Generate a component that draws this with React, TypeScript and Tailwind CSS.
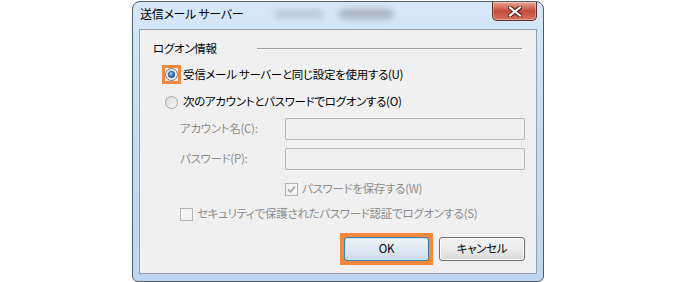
import React from 'react';

const font = "font-['Noto_Sans_CJK_JP','Noto_Sans',sans-serif] [font-feature-settings:'palt']";

const Radio = ({ checked = false }: { checked?: boolean }) => (
  <svg width="13" height="13" viewBox="0 0 13 13">
    <defs>
      <linearGradient id={checked ? 'rg1' : 'rg2'} x1="0" y1="0" x2="1" y2="1">
        <stop offset="0" stopColor="#d6d6d6" />
        <stop offset="1" stopColor="#fbfbfb" />
      </linearGradient>
      <radialGradient id="dot" cx="0.4" cy="0.35" r="0.7">
        <stop offset="0" stopColor="#b5dcf7" />
        <stop offset="0.45" stopColor="#3b86cf" />
        <stop offset="1" stopColor="#1a4f8c" />
      </radialGradient>
    </defs>
    <circle cx="6.5" cy="6.5" r="6" fill={`url(#${checked ? 'rg1' : 'rg2'})`} stroke={checked ? '#7a7a7a' : '#a3a3a3'} />
    {checked && <circle cx="6.5" cy="6.5" r="3.3" fill="url(#dot)" stroke="#1f4f82" strokeWidth="0.6" />}
  </svg>
);

const Check = ({ checked = false }: { checked?: boolean }) => (
  <span className="w-[13px] h-[13px] border border-[#b4b4b4] bg-[#f4f4f4] flex items-center justify-center shrink-0">
    {checked && (
      <svg width="9" height="9" viewBox="0 0 9 9">
        <path d="M1 4.5 L3.5 7 L8 1.5" fill="none" stroke="#a9a9a9" strokeWidth="1.8" />
      </svg>
    )}
  </span>
);

const CloseButton = () => (
  <div className="w-[45px] h-[19px] rounded-b-[5px] border border-t-0 border-[#5e2d25] bg-gradient-to-b from-[#e7a795] via-[#c4493a] to-[#d6725c] flex items-center justify-center shadow-[inset_0_0_0_1px_rgba(255,255,255,0.35)]">
    <svg width="14" height="11" viewBox="0 0 14 11">
      <path d="M2 1.5 L12 9.5 M12 1.5 L2 9.5" stroke="#4a1a14" strokeWidth="4.2" strokeLinecap="square" />
      <path d="M2 1.5 L12 9.5 M12 1.5 L2 9.5" stroke="#ffffff" strokeWidth="2.2" strokeLinecap="square" />
    </svg>
  </div>
);

export default function App() {
  return (
    <div className={`w-[676px] h-[282px] bg-white flex justify-center ${font} text-[11.5px] tracking-[-0.3px] leading-none`}>
      <div className="mt-[1px] w-[412px] h-[281px] border border-[#4f5b68] rounded-t-[8px] rounded-b-[6px] bg-gradient-to-b from-[#d6e7f8] via-[#c6dcf2] to-[#bdd5ee] flex flex-col px-[6px] pb-[7px]">
        <div className="relative h-[27px] flex justify-between">
          <div className="pl-[1px] pt-[6px] text-[12px] text-black z-10">送信メール サーバー</div>
          <div className="absolute left-[135px] top-[8px] w-[50px] h-[8px] rounded-full bg-[#a9b4c0] blur-[3px] opacity-60" />
          <div className="absolute left-[200px] top-[7px] w-[55px] h-[10px] rounded-full bg-[#8c96a2] blur-[3px] opacity-60" />
          <CloseButton />
        </div>
        <div className="flex-1 border border-[#8da0b6] bg-[#f0f0f0] pl-[13px] pr-[11px] flex flex-col text-black">
          <div className="mt-[11px] h-[16px] flex items-center">
            <span className="w-[104px]">ログオン情報</span>
            <div className="flex-1 mr-[3px] border-t border-[#a0a0a0] border-b border-b-white" />
          </div>
          <div className="mt-[8px] h-[19px] flex items-center">
            <div className="ml-[9px] w-[19px] h-[19px] border-[3px] border-[#f5883a] flex items-center justify-center">
              <Radio checked />
            </div>
            <span className="ml-[2px]">受信メール サーバーと同じ設定を使用する(U)</span>
          </div>
          <div className="mt-[9px] h-[18px] flex items-center">
            <div className="ml-[12px] w-[13px] h-[13px] flex">
              <Radio />
            </div>
            <span className="ml-[5px]">次のアカウントとパスワードでログオンする(O)</span>
          </div>
          <div className="mt-[7px] h-[22px] flex items-center text-[#8d8d8d]">
            <span className="ml-[27px] w-[105px]">アカウント名(C):</span>
            <div className="flex-1 h-[22px] border border-[#b6b6b6] rounded-[2px] bg-[#f0f0f0]" />
          </div>
          <div className="mt-[8px] h-[22px] flex items-center text-[#8d8d8d]">
            <span className="ml-[27px] w-[105px]">パスワード(P):</span>
            <div className="flex-1 h-[22px] border border-[#b6b6b6] rounded-[2px] bg-[#f0f0f0]" />
          </div>
          <div className="mt-[11px] h-[16px] flex items-center text-[#8d8d8d]">
            <div className="ml-[132px]">
              <Check checked />
            </div>
            <span className="ml-[4px]">パスワードを保存する(W)</span>
          </div>
          <div className="mt-[9px] h-[16px] flex items-center text-[#8d8d8d]">
            <div className="ml-[27px]">
              <Check />
            </div>
            <span className="ml-[4px]">セキュリティで保護されたパスワード認証でログオンする(S)</span>
          </div>
          <div className="mt-[11px] h-[32px] flex justify-end items-center">
            <div className="p-[4px] bg-[#f5883a]">
              <button className="block w-[85px] h-[24px] rounded-[3px] border border-[#3c7fb1] bg-gradient-to-b from-[#edf4f9] via-[#dfe9f1] to-[#cbdbe8] shadow-[inset_0_0_0_1px_#c0e6f9] text-black text-[11.5px]">
                OK
              </button>
            </div>
            <button className="ml-[6px] w-[86px] h-[24px] rounded-[3px] border border-[#707070] bg-gradient-to-b from-[#f2f2f2] via-[#ebebeb] to-[#d8d8d8] shadow-[inset_0_0_0_1px_#fcfcfc] text-black text-[11.5px]">
              キャンセル
            </button>
          </div>
        </div>
      </div>
    </div>
  );
}
